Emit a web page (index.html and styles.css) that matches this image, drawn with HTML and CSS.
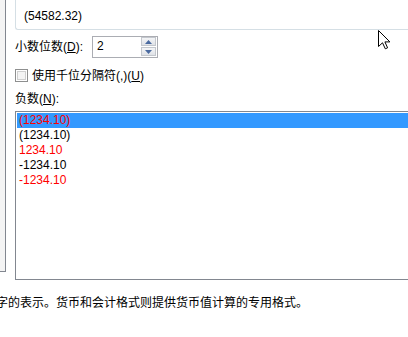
FILE: index.html
```html
<!DOCTYPE html>
<html lang="zh-CN">
<head>
<meta charset="utf-8">
<link rel="stylesheet" href="styles.css">
</head>
<body>
<div class="page">
  <div class="layout">
    <div class="catlist"></div>
    <div class="main">
      <div class="sample"><span class="sample-text">(54582.32)</span></div>
      <div class="decimals">
        <span class="label">小数位数(<u>D</u>):</span>
        <div class="spinbox">
          <span class="value">2</span>
          <div class="spin">
            <div class="spin-btn"><svg width="7" height="4" viewBox="0 0 7 4"><path d="M3.5 0 L7 4 L0 4 Z" fill="#4a6aa0"/></svg></div>
            <div class="spin-btn"><svg width="7" height="4" viewBox="0 0 7 4"><path d="M0 0 L7 0 L3.5 4 Z" fill="#4a6aa0"/></svg></div>
          </div>
        </div>
      </div>
      <label class="check-row">
        <span class="checkbox"></span>
        <span class="label">使用千位分隔符(,)(<u>U</u>)</span>
      </label>
      <div class="neg-label">负数(<u>N</u>):</div>
      <ul class="listbox">
        <li class="item selected red">(1234.10)</li>
        <li class="item">(1234.10)</li>
        <li class="item red">1234.10</li>
        <li class="item">-1234.10</li>
        <li class="item red">-1234.10</li>
      </ul>
    </div>
  </div>
  <p class="desc">数值格式用于一般数字的表示。货币和会计格式则提供货币值计算的专用格式。</p>
  <svg class="cursor" width="13" height="20" viewBox="0 0 13 20">
    <path d="M0.5 0.5 L0.5 16.5 L4.5 12.8 L7.3 18.8 L9.6 17.8 L6.9 11.9 L11.9 11.9 Z" fill="#fff" stroke="#000" stroke-width="1" stroke-linejoin="miter"/>
  </svg>
</div>
</body>
</html>
```
FILE: styles.css
```css
* { box-sizing: border-box; }
html, body {
  margin: 0;
  padding: 0;
  background: #fff;
  overflow: hidden;
}
body {
  width: 408px;
  height: 337px;
  font-family: "Liberation Sans", "Noto Sans CJK SC", sans-serif;
  font-size: 12px;
  color: #000;
}
.page {
  position: relative;
  width: 408px;
  height: 337px;
  overflow: hidden;
}
.layout {
  display: flex;
  align-items: flex-start;
}
.catlist {
  width: 6px;
  height: 272px;
  flex: none;
  background: #f4f4f4;
  border-right: 1px solid #828790;
  border-bottom: 1px solid #828790;
}
.main {
  margin-left: 9px;
  flex: none;
  width: 420px;
  display: flex;
  flex-direction: column;
}
.sample {
  height: 30px;
  width: 420px;
  border-left: 1px solid #d5dfe5;
  border-bottom: 1px solid #d5dfe5;
  border-bottom-left-radius: 3px;
  padding: 9px 0 0 8px;
  line-height: 15px;
}
.decimals {
  margin-top: 6px;
  display: flex;
  align-items: center;
  height: 22px;
}
.decimals .label {
  width: 77px;
  line-height: 16px;
}
.spinbox {
  width: 66px;
  height: 22px;
  border: 1px solid #abadb3;
  display: flex;
  align-items: stretch;
  padding: 0 1px 0 4px;
}
.spinbox .value {
  flex: 1;
  line-height: 19px;
}
.spin {
  width: 15px;
  display: flex;
  flex-direction: column;
  padding: 0 0 1px 0;
  gap: 1px;
  justify-content: center;
}
.spin-btn {
  height: 9px;
  border: 1px solid #c3c7cd;
  background: linear-gradient(#f4f5f7, #dfe2e7);
  display: flex;
  align-items: center;
  justify-content: center;
}
.spin-btn:first-child {
  height: 10px;
}
.spin-btn svg { display: block; }
.check-row {
  margin-top: 11px;
  display: flex;
  align-items: center;
  height: 13px;
  gap: 4px;
}
.checkbox {
  width: 13px;
  height: 13px;
  border: 1px solid #8e8f8f;
  background: #f4f4f4;
  box-shadow: inset 0 0 0 1px #fff, inset 0 0 0 2px #cfcfcf;
}
.check-row .label {
  line-height: 16px;
}
.neg-label {
  margin-top: 9px;
  line-height: 16px;
  height: 16px;
}
.listbox {
  list-style: none;
  margin: 4px 0 0 0;
  padding: 1px;
  width: 420px;
  height: 169px;
  border: 1px solid #828790;
}
.item {
  height: 15px;
  line-height: 15px;
  padding-left: 2px;
}
.item.red { color: #ff0000; }
.item.selected { background: #3399ff; }
.desc {
  margin: 15px 0 0 -112px;
  white-space: nowrap;
  line-height: 16px;
}
.cursor {
  position: absolute;
  left: 378px;
  top: 30px;
}
u { text-decoration: underline; text-underline-offset: 1px; }
```
